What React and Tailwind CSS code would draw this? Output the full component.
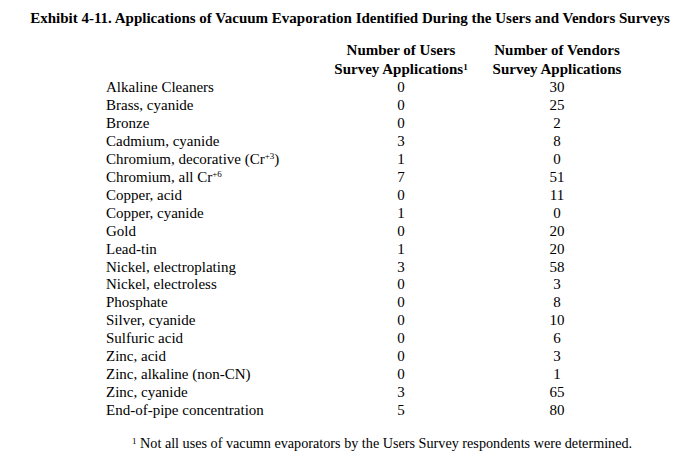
import React from "react";

const Sup = ({ children }) => <sup className="text-[9px]">{children}</sup>;

const rows = [
  ["Alkaline Cleaners", "0", "30"],
  ["Brass, cyanide", "0", "25"],
  ["Bronze", "0", "2"],
  ["Cadmium, cyanide", "3", "8"],
  [<>Chromium, decorative (Cr<Sup>+3</Sup>)</>, "1", "0"],
  [<>Chromium, all Cr<Sup>+6</Sup></>, "7", "51"],
  ["Copper, acid", "0", "11"],
  ["Copper, cyanide", "1", "0"],
  ["Gold", "0", "20"],
  ["Lead-tin", "1", "20"],
  ["Nickel, electroplating", "3", "58"],
  ["Nickel, electroless", "0", "3"],
  ["Phosphate", "0", "8"],
  ["Silver, cyanide", "0", "10"],
  ["Sulfuric acid", "0", "6"],
  ["Zinc, acid", "0", "3"],
  ["Zinc, alkaline (non-CN)", "0", "1"],
  ["Zinc, cyanide", "3", "65"],
  ["End-of-pipe concentration", "5", "80"],
];

export default function App() {
  return (
    <div
      className="w-[700px] h-[462px] bg-white text-black overflow-hidden"
      style={{ fontFamily: '"Liberation Serif", "Times New Roman", serif' }}
    >
      <div className="pt-[8px] text-center font-bold text-[15px] leading-[20px]">
        Exhibit 4-11. Applications of Vacuum Evaporation Identified During the Users and Vendors Surveys
      </div>
      <div className="pl-[106px] pt-[13px]">
        <div className="grid grid-cols-[230px_130px_182px] font-bold text-[15px] leading-[19px] whitespace-nowrap">
          <div></div>
          <div className="flex flex-col items-center">
            <span>Number of Users</span>
            <span>
              Survey Applications<Sup>1</Sup>
            </span>
          </div>
          <div className="flex flex-col items-center">
            <span>Number of Vendors</span>
            <span>Survey Applications</span>
          </div>
        </div>
        <div className="grid grid-cols-[230px_130px_182px] text-[15px] leading-[17.95px]">
          {rows.map((r, i) => (
            <React.Fragment key={i}>
              <div>{r[0]}</div>
              <div className="text-center">{r[1]}</div>
              <div className="text-center">{r[2]}</div>
            </React.Fragment>
          ))}
        </div>
      </div>
      <div className="pl-[132px] pt-[14px] text-[14.2px] leading-[18px]">
        <Sup>1</Sup> Not all uses of vacumn evaporators by the Users Survey respondents were determined.
      </div>
    </div>
  );
}
